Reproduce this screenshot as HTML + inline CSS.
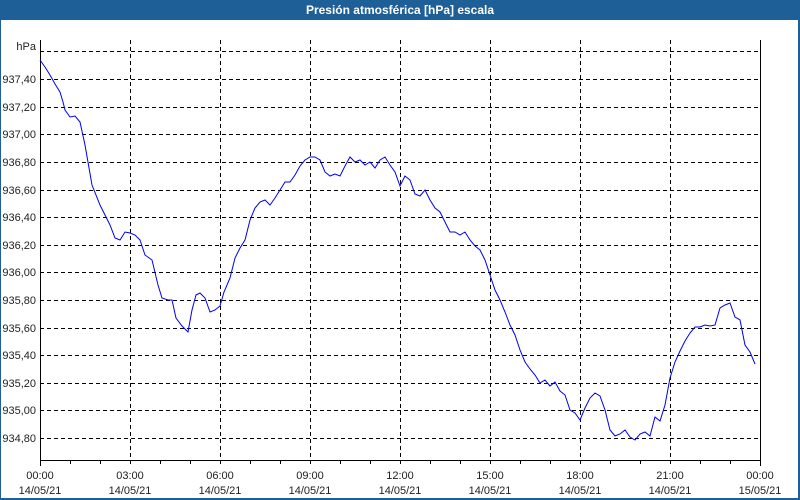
<!DOCTYPE html>
<html><head><meta charset="utf-8"><style>
html,body{margin:0;padding:0;width:800px;height:500px;overflow:hidden;background:#fff}
.t{position:absolute;left:0;top:0;width:800px;height:20px;background:#1d5f96;color:#fff;font:bold 12px "Liberation Sans",sans-serif;text-align:center;line-height:20px}
.b{position:absolute;left:0;top:20px;width:797px;height:478px;border-left:1px solid #1d5f96;border-right:2px solid #1d5f96;border-bottom:2px solid #1d5f96}
svg{position:absolute;left:0;top:0}
text{font-family:"Liberation Sans",sans-serif;font-size:11px;fill:#222}
</style></head><body>
<div class="t">Presión atmosférica [hPa] escala</div>
<div class="b"></div>
<svg width="800" height="500">
<g stroke="#000" stroke-dasharray="4,3" stroke-width="1">
<line x1="40" x2="760" y1="51.5" y2="51.5"/><line x1="40" x2="760" y1="79.5" y2="79.5"/><line x1="40" x2="760" y1="107.5" y2="107.5"/><line x1="40" x2="760" y1="134.5" y2="134.5"/><line x1="40" x2="760" y1="162.5" y2="162.5"/><line x1="40" x2="760" y1="190.5" y2="190.5"/><line x1="40" x2="760" y1="217.5" y2="217.5"/><line x1="40" x2="760" y1="245.5" y2="245.5"/><line x1="40" x2="760" y1="272.5" y2="272.5"/><line x1="40" x2="760" y1="300.5" y2="300.5"/><line x1="40" x2="760" y1="328.5" y2="328.5"/><line x1="40" x2="760" y1="355.5" y2="355.5"/><line x1="40" x2="760" y1="383.5" y2="383.5"/><line x1="40" x2="760" y1="410.5" y2="410.5"/><line x1="40" x2="760" y1="438.5" y2="438.5"/>
<line x1="130.5" x2="130.5" y1="40" y2="466"/><line x1="220.5" x2="220.5" y1="40" y2="466"/><line x1="310.5" x2="310.5" y1="40" y2="466"/><line x1="400.5" x2="400.5" y1="40" y2="466"/><line x1="490.5" x2="490.5" y1="40" y2="466"/><line x1="580.5" x2="580.5" y1="40" y2="466"/><line x1="670.5" x2="670.5" y1="40" y2="466"/>
</g>
<g stroke="#000" stroke-width="1">
<polyline fill="none" points="40.5,40 40.5,460.5 760.5,460.5 760.5,40"/>
<line x1="70.5" x2="70.5" y1="460" y2="464"/><line x1="100.5" x2="100.5" y1="460" y2="464"/><line x1="160.5" x2="160.5" y1="460" y2="464"/><line x1="190.5" x2="190.5" y1="460" y2="464"/><line x1="250.5" x2="250.5" y1="460" y2="464"/><line x1="280.5" x2="280.5" y1="460" y2="464"/><line x1="340.5" x2="340.5" y1="460" y2="464"/><line x1="370.5" x2="370.5" y1="460" y2="464"/><line x1="430.5" x2="430.5" y1="460" y2="464"/><line x1="460.5" x2="460.5" y1="460" y2="464"/><line x1="520.5" x2="520.5" y1="460" y2="464"/><line x1="550.5" x2="550.5" y1="460" y2="464"/><line x1="610.5" x2="610.5" y1="460" y2="464"/><line x1="640.5" x2="640.5" y1="460" y2="464"/><line x1="700.5" x2="700.5" y1="460" y2="464"/><line x1="730.5" x2="730.5" y1="460" y2="464"/><line x1="40.5" x2="40.5" y1="460" y2="466"/><line x1="760.5" x2="760.5" y1="460" y2="466"/>
</g>
<polyline fill="none" stroke="#0000ee" stroke-width="1" points="40,60 45,67 50,75 55,84 60,92 63,102 65,110 70,117 75,116 80,122 85,145 92,185 100,205 110,225 115,238 120,240 125,232 130,233 135,235 140,240 145,255 152,260 158,285 162,298 168,300 172,300 176,318 182,326 188,332 192,310 196,295 200,293 205,298 210,312 215,310 220,306 224,292 230,278 235,258 240,248 245,240 250,220 255,208 260,202 265,200 270,205 275,198 280,190 285,182 290,182 295,175 300,166 305,160 310,157 315,157 320,160 325,172 330,176 335,174 340,176 345,166 350,157 355,162 360,160 365,165 370,162 375,168 380,160 385,157 390,165 395,172 400,186 405,176 410,180 415,194 420,196 425,190 430,200 435,208 440,212 445,222 450,232 455,232 460,235 465,232 470,240 475,246 480,250 485,260 490,275 495,290 500,300 505,312 510,325 515,335 520,350 525,362 530,369 535,375 540,383 545,380 550,386 555,382 560,391 565,395 570,410 575,413 580,420 585,408 590,398 595,393 600,396 605,410 610,430 615,436 620,434 625,430 630,437 635,440 640,434 645,432 650,436 655,417 660,421 665,405 670,378 675,362 680,351 685,341 690,333 695,327 700,327 705,325 710,326 715,325 720,308 725,305 730,303 735,317 740,320 745,345 750,352 755,364"/>
<g text-anchor="end">
<text x="36" y="50">hPa</text>
<text x="36" y="83">937,40</text><text x="36" y="111">937,20</text><text x="36" y="138">937,00</text><text x="36" y="166">936,80</text><text x="36" y="194">936,60</text><text x="36" y="221">936,40</text><text x="36" y="249">936,20</text><text x="36" y="276">936,00</text><text x="36" y="304">935,80</text><text x="36" y="332">935,60</text><text x="36" y="359">935,40</text><text x="36" y="387">935,20</text><text x="36" y="414">935,00</text><text x="36" y="442">934,80</text>
</g>
<g text-anchor="middle">
<text x="40" y="479">00:00</text><text x="40" y="494">14/05/21</text>
<text x="130" y="479">03:00</text><text x="130" y="494">14/05/21</text>
<text x="220" y="479">06:00</text><text x="220" y="494">14/05/21</text>
<text x="310" y="479">09:00</text><text x="310" y="494">14/05/21</text>
<text x="400" y="479">12:00</text><text x="400" y="494">14/05/21</text>
<text x="490" y="479">15:00</text><text x="490" y="494">14/05/21</text>
<text x="580" y="479">18:00</text><text x="580" y="494">14/05/21</text>
<text x="670" y="479">21:00</text><text x="670" y="494">14/05/21</text>
<text x="760" y="479">00:00</text><text x="760" y="494">15/05/21</text>
</g>
</svg>
</body></html>
